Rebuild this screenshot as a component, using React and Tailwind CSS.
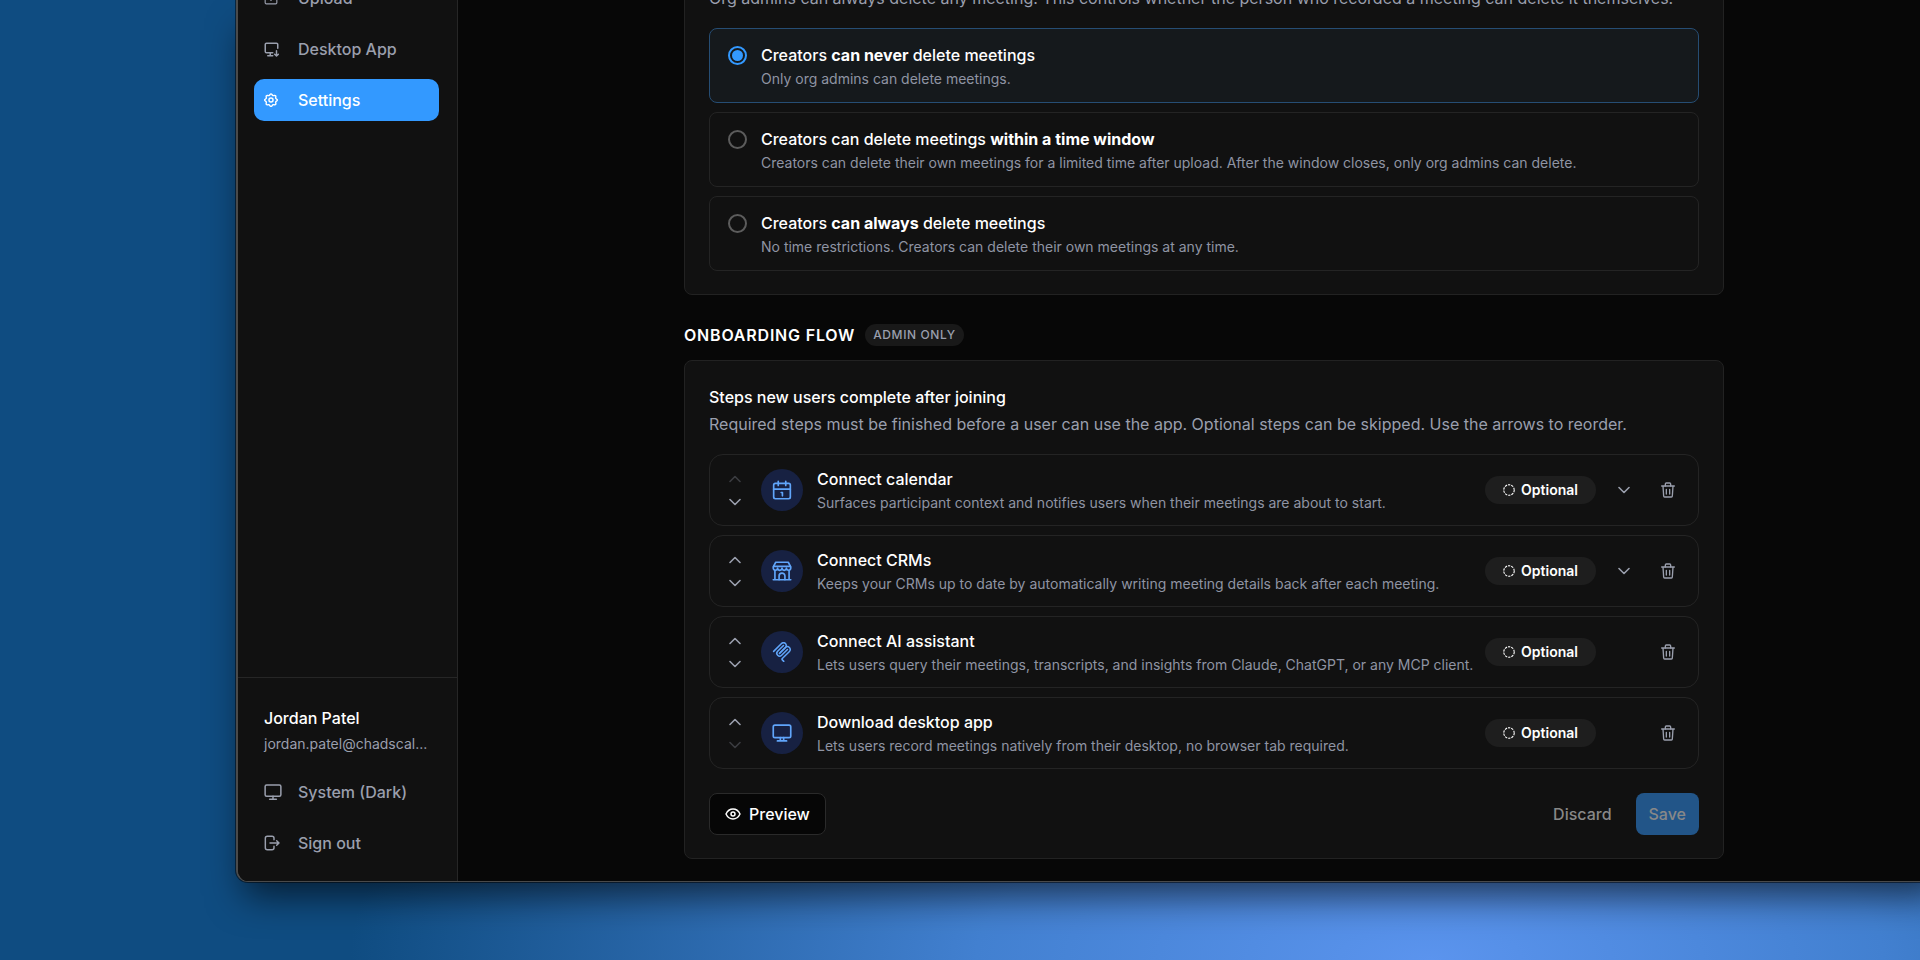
import { useState } from "react";

const CREATOR_OPTIONS = [
  {
    id: "never",
    title: (
      <>
        Creators <strong className="font-bold">can never</strong> delete meetings
      </>
    ),
    description: "Only org admins can delete meetings.",
  },
  {
    id: "window",
    title: (
      <>
        Creators can delete meetings <strong className="font-bold">within a time window</strong>
      </>
    ),
    description:
      "Creators can delete their own meetings for a limited time after upload. After the window closes, only org admins can delete.",
  },
  {
    id: "always",
    title: (
      <>
        Creators <strong className="font-bold">can always</strong> delete meetings
      </>
    ),
    description: "No time restrictions. Creators can delete their own meetings at any time.",
  },
];

const STEPS = [
  {
    id: "calendar",
    icon: CalendarIcon,
    title: "Connect calendar",
    description: "Surfaces participant context and notifies users when their meetings are about to start.",
    expandable: true,
  },
  {
    id: "crm",
    icon: StoreIcon,
    title: "Connect CRMs",
    description: "Keeps your CRMs up to date by automatically writing meeting details back after each meeting.",
    expandable: true,
  },
  {
    id: "assistant",
    icon: McpIcon,
    title: "Connect AI assistant",
    description: "Lets users query their meetings, transcripts, and insights from Claude, ChatGPT, or any MCP client.",
    expandable: false,
  },
  {
    id: "desktop",
    icon: MonitorIcon,
    title: "Download desktop app",
    description: "Lets users record meetings natively from their desktop, no browser tab required.",
    expandable: false,
  },
];

function Icon({ className, children, viewBox = "0 0 24 24", strokeWidth = 2 }) {
  return (
    <svg
      className={className}
      viewBox={viewBox}
      fill="none"
      stroke="currentColor"
      strokeWidth={strokeWidth}
      strokeLinecap="round"
      strokeLinejoin="round"
      aria-hidden="true"
    >
      {children}
    </svg>
  );
}

function UploadIcon({ className }) {
  return (
    <Icon className={className}>
      <path d="M8 6H4a2 2 0 0 0-2 2v12a2 2 0 0 0 2 2h16a2 2 0 0 0 2-2V8a2 2 0 0 0-2-2h-4" />
      <path d="M12 16V2M8 12l4 4 4-4" />
    </Icon>
  );
}

function DesktopAppIcon({ className }) {
  return (
    <Icon className={className} strokeWidth={2.4}>
      <path d="M22 10V4a2 2 0 0 0-2-2H4a2 2 0 0 0-2 2v11a2 2 0 0 0 2 2h10" />
      <path d="M10 17v5M6 22h8" />
      <path d="M20 14v8M17 19.500l3 3 3-3" />
    </Icon>
  );
}

function SettingsIcon({ className }) {
  return (
    <Icon className={className} strokeWidth={2.4}>
      <path d="M12 1.500c1.600 0 2 2.400 3.400 2.900s3.400-.9 4.500.2-.3 3.100.2 4.500 2.900 1.300 2.900 2.900-2.400 2-2.900 3.400.9 3.400-.2 4.500-3.100-.3-4.500.2-1.800 2.900-3.400 2.900-2-2.400-3.400-2.900-3.400.9-4.500-.2.300-3.100-.2-4.500S1 13.600 1 12s2.400-1.500 2.900-2.900-.9-3.400.2-4.500 3.100.3 4.500-.2 1.800-2.900 3.400-2.900z" />
      <circle cx="12" cy="12" r="3.500" />
    </Icon>
  );
}

function MonitorIcon({ className }) {
  return (
    <Icon className={className}>
      <rect x="1.500" y="2.500" width="21" height="15" rx="2" />
      <path d="M10 17.500v4M14 17.500v4M6.500 21.500h11" />
    </Icon>
  );
}

function SystemIcon({ className }) {
  return (
    <Icon className={className}>
      <rect x="1.500" y="2.500" width="21" height="15" rx="2" />
      <path d="M12 17.500v4M7.500 21.500h9" />
    </Icon>
  );
}

function SignOutIcon({ className }) {
  return (
    <Icon className={className} strokeWidth={2.2}>
      <path d="M15 7V5a3 3 0 0 0-3-3H5a3 3 0 0 0-3 3v14a3 3 0 0 0 3 3h7a3 3 0 0 0 3-3v-2" />
      <path d="M9 12h13.500M19 8.500l3.500 3.500-3.500 3.500" />
    </Icon>
  );
}

function CalendarIcon({ className }) {
  return (
    <Icon className={className}>
      <rect x="2" y="4" width="20" height="18.500" rx="2" />
      <path d="M2 11h20M7.500 1.500v5M16.500 1.500v5M11 15h1.500v4" />
    </Icon>
  );
}

function StoreIcon({ className }) {
  return (
    <Icon className={className}>
      <path d="M4.500 1.500h15L22.500 7v1.500a2.600 2.600 0 0 1-5.200 0 2.600 2.600 0 0 1-5.300 0 2.600 2.600 0 0 1-5.300 0 2.600 2.600 0 0 1-5.200 0V7z" />
      <path d="M2 6.500h20M3.500 11.500v11M20.500 11.500v11M1.500 22.500h21" />
      <path d="M8.500 22.500v-4.500a3.500 3.500 0 0 1 7 0v4.500" />
    </Icon>
  );
}

function McpIcon({ className }) {
  return (
    <Icon className={className} viewBox="8 4 164 172" strokeWidth={13}>
      <path d="M18 84.853l67.882-67.882c9.373-9.373 24.569-9.373 33.941 0 9.373 9.372 9.373 24.568 0 33.941l-51.265 51.265" />
      <path d="M69.265 101.470l50.558-50.558c9.373-9.373 24.569-9.373 33.942 0l.353.353c9.373 9.373 9.373 24.569 0 33.941L92.725 146.600c-3.124 3.124-3.124 8.189 0 11.313l12.606 12.607" />
      <path d="M102.853 33.941L52.648 84.146c-9.372 9.372-9.372 24.568 0 33.941 9.373 9.372 24.569 9.372 33.941 0l50.205-50.205" />
    </Icon>
  );
}

function TrashIcon({ className }) {
  return (
    <Icon className={className}>
      <path d="M2.500 6h19M4.500 6l1 15a1.500 1.500 0 0 0 1.500 1.500h10a1.500 1.500 0 0 0 1.500-1.500l1-15" />
      <path d="M8 6V3a1.500 1.500 0 0 1 1.500-1.500h5A1.500 1.500 0 0 1 16 3v3M9.500 11v7M14.500 11v7" />
    </Icon>
  );
}

function EyeIcon({ className }) {
  return (
    <Icon className={className} strokeWidth={2.2}>
      <path d="M1.500 12S5 4.500 12 4.500 22.500 12 22.500 12 19 19.500 12 19.500 1.500 12 1.500 12z" />
      <circle cx="12" cy="12" r="3" />
    </Icon>
  );
}

function DashedCircleIcon({ className }) {
  return (
    <svg className={className} viewBox="0 0 24 24" fill="none" stroke="currentColor" aria-hidden="true">
      <circle cx="12" cy="12" r="10.500" strokeWidth="2.200" strokeDasharray="4.600 2" />
    </svg>
  );
}

function Chevron({ up = false }) {
  return (
    <Icon className="h-2 w-3" viewBox="0 0 12 8" strokeWidth={1.6}>
      <path d={up ? "M1 6.500l5-5 5 5" : "M1 1.500l5 5 5-5"} />
    </Icon>
  );
}

function NavItem({ icon: ItemIcon, label, active = false, iconClass = "size-3.5" }) {
  return (
    <a
      href="#"
      aria-current={active ? "page" : undefined}
      className={`flex h-[42px] shrink-0 items-center rounded-[10px] px-2.5 text-base font-medium ${
        active ? "bg-[#3399ff] text-white" : "text-[#9a9fad]"
      }`}
    >
      <span className="flex w-[34px] shrink-0">
        <ItemIcon className={iconClass} />
      </span>
      {label}
    </a>
  );
}

function Sidebar() {
  return (
    <aside className="flex w-[220px] shrink-0 flex-col justify-between border-r border-[#262626] bg-[#111111]">
      <nav className="flex h-[121px] flex-col justify-end gap-[9px] overflow-hidden pr-[18px] pl-4">
        <NavItem icon={UploadIcon} label="Upload" />
        <NavItem icon={DesktopAppIcon} label="Desktop App" iconClass="size-[15px]" />
        <NavItem icon={SettingsIcon} label="Settings" active />
      </nav>

      <div className="border-t border-[#262626] pt-7 pr-[18px] pb-[17px] pl-4">
        <div className="px-2.5">
          <p className="text-base leading-6 font-medium text-white">Jordan Patel</p>
          <p className="mt-1 text-sm whitespace-nowrap text-[#9a9fad]">jordan.patel@chadscal...</p>
        </div>
        <div className="mt-[17px] flex flex-col gap-[9px]">
          <NavItem icon={SystemIcon} label="System (Dark)" iconClass="size-[18px]" />
          <NavItem icon={SignOutIcon} label="Sign out" iconClass="size-4" />
        </div>
      </div>
    </aside>
  );
}

function CreatorOption({ option, checked, onSelect }) {
  return (
    <label
      className={`flex gap-[14px] rounded-lg border px-[18px] pt-[14px] pb-[13px] ${
        checked ? "border-[#264d73] bg-[#15191c]" : "border-[#242424]"
      }`}
    >
      <input
        type="radio"
        name="creator-delete"
        checked={checked}
        onChange={() => onSelect(option.id)}
        className="mt-[3px] size-[19px] shrink-0 appearance-none rounded-full border-2 border-[#5c5c5c] bg-clip-content p-[2px] checked:border-[#3399ff] checked:bg-[#3399ff]"
      />
      <span className="block">
        <span className="block text-base leading-6 font-medium text-white">{option.title}</span>
        <span className="mt-0.5 block text-sm text-[#8f94a3]">{option.description}</span>
      </span>
    </label>
  );
}

function StepRow({ step, first, last }) {
  const StepIcon = step.icon;
  return (
    <li className="flex h-[72px] items-center rounded-[14px] border border-[#242424] pr-3.5 pl-[13px]">
      <div className="flex flex-col text-[#9a9fad]">
        <button
          type="button"
          disabled={first}
          aria-label={`Move ${step.title} up`}
          className="flex h-[23px] w-6 items-center justify-center disabled:opacity-30"
        >
          <Chevron up />
        </button>
        <button
          type="button"
          disabled={last}
          aria-label={`Move ${step.title} down`}
          className="flex h-[23px] w-6 items-center justify-center disabled:opacity-30"
        >
          <Chevron />
        </button>
      </div>
      <span className="ml-3.5 flex size-[42px] shrink-0 items-center justify-center rounded-full bg-[#172142] text-[#60a5fa]">
        <StepIcon className="size-5" />
      </span>
      <div className="ml-3.5 min-w-0 flex-1">
        <h4 className="text-base leading-6 font-medium text-white">{step.title}</h4>
        <p className="mt-0.5 text-sm whitespace-nowrap text-[#8f94a3]">{step.description}</p>
      </div>
      <button
        type="button"
        className="flex h-7 shrink-0 items-center gap-[6px] rounded-full bg-[#1e1e1e] px-[18px] text-sm font-semibold text-white"
      >
        <DashedCircleIcon className="size-3" />
        Optional
      </button>
      <div className="ml-3 flex w-8 shrink-0 justify-center text-[#9a9fad]">
        {step.expandable && (
          <button type="button" aria-label={`Expand ${step.title}`} className="p-2">
            <Chevron />
          </button>
        )}
      </div>
      <button
        type="button"
        aria-label={`Remove ${step.title}`}
        className="ml-3 flex size-8 shrink-0 items-center justify-center text-[#9a9fad]"
      >
        <TrashIcon className="size-4" />
      </button>
    </li>
  );
}

export default function App() {
  const [creatorRule, setCreatorRule] = useState("never");

  return (
    <div className="flex h-screen overflow-hidden bg-[#0f4c81] bg-[radial-gradient(ellipse_1080px_420px_at_1430px_100%,#5b94ee_0%,#4280d0_42%,#0f4c81_100%)] pb-[78px] pl-[236px] font-['Inter',sans-serif] antialiased">
      {/* app window, running past the right edge of the desktop */}
      <div className="-mr-[30px] flex min-w-0 flex-1 overflow-hidden rounded-bl-xl border-b border-l-2 border-[#4a4a4a] bg-[#070707] shadow-[0_0_0_1px_rgba(0,0,0,0.5),0_22px_36px_-8px_rgba(0,0,0,0.6)]">
        <Sidebar />

        <main className="flex min-w-0 flex-1 flex-col justify-end overflow-hidden px-6 pb-[22px]">
          <div className="mx-auto w-full max-w-[1040px]">
            <section className="rounded-lg border border-[#222222] bg-[#111111] px-6 pb-[23px]">
              <p className="text-base leading-6 text-[#9a9fad]">
                Org admins can always delete any meeting. This controls whether the person who recorded a
                meeting can delete it themselves.
              </p>
              <div className="mt-[18px] flex flex-col gap-[9px]">
                {CREATOR_OPTIONS.map((option) => (
                  <CreatorOption
                    key={option.id}
                    option={option}
                    checked={creatorRule === option.id}
                    onSelect={setCreatorRule}
                  />
                ))}
              </div>
            </section>

            <div className="mt-[29px] flex items-center gap-2.5">
              <h2 className="text-base leading-[22px] font-semibold tracking-wider text-white">
                ONBOARDING FLOW
              </h2>
              <span className="rounded-full bg-[#191919] px-2 text-xs leading-[22px] font-medium tracking-wider text-[#9a9fad]">
                ADMIN ONLY
              </span>
            </div>

            <section className="mt-3.5 rounded-lg border border-[#222222] bg-[#111111] px-6 pt-6 pb-[23px]">
              <h3 className="text-base leading-6 font-medium text-white">
                Steps new users complete after joining
              </h3>
              <p className="mt-[3px] text-base leading-6 text-[#9a9fad]">
                Required steps must be finished before a user can use the app. Optional steps can be
                skipped. Use the arrows to reorder.
              </p>

              <ul className="mt-[18px] flex flex-col gap-[9px]">
                {STEPS.map((step, i) => (
                  <StepRow key={step.id} step={step} first={i === 0} last={i === STEPS.length - 1} />
                ))}
              </ul>

              <div className="mt-6 flex items-center">
                <button
                  type="button"
                  className="flex h-[42px] items-center gap-2 rounded-lg border border-[#2a2a2a] bg-[#060606] px-[15px] text-base font-medium text-white"
                >
                  <EyeIcon className="size-4" />
                  Preview
                </button>
                <button
                  type="button"
                  disabled
                  className="ml-auto h-[42px] px-6 text-base font-medium text-[#888888]"
                >
                  Discard
                </button>
                <button
                  type="button"
                  disabled
                  className="h-[42px] rounded-lg bg-[#225588] px-[13px] text-base font-medium text-[#888888]"
                >
                  Save
                </button>
              </div>
            </section>
          </div>
        </main>
      </div>
    </div>
  );
}
